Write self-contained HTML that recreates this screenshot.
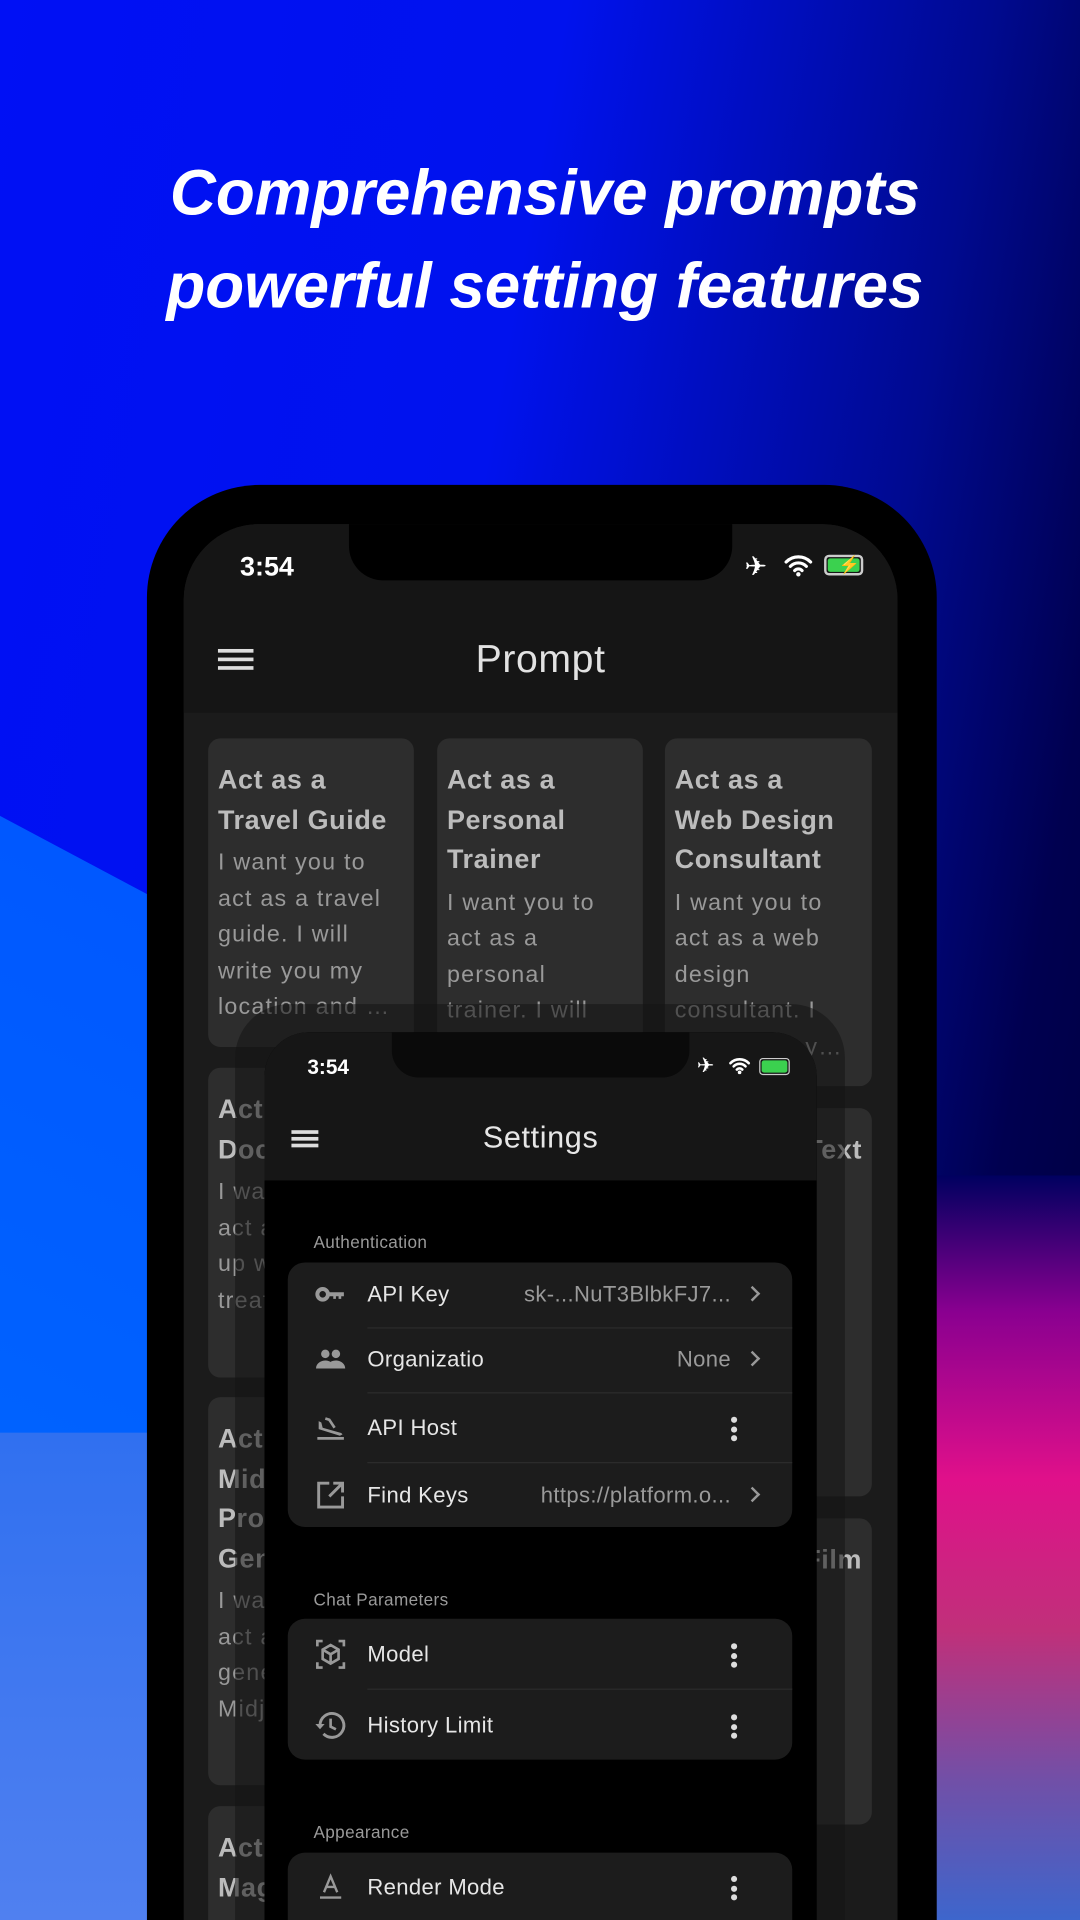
<!DOCTYPE html>
<html><head><meta charset="utf-8"><style>
*{margin:0;padding:0;box-sizing:border-box}
html,body{width:1080px;height:1920px;overflow:hidden;background:#000}
#clip{position:absolute;left:0;top:0;width:1080px;height:1920px;overflow:hidden}
#w{position:absolute;left:0;top:0;width:882px;height:1568px;transform:scale(1.22449);transform-origin:0 0;overflow:hidden;font-family:"Liberation Sans",sans-serif;
background:linear-gradient(100deg,#0010f5 0%,#0012ee 40%,#000a90 70%,#000050 85%,#00003a 100%)}
.a{position:absolute}
.t{color:#fff;font-weight:bold;font-style:italic;font-size:52px;width:882px;text-align:center;left:4px;letter-spacing:0px}
.card{position:absolute;background:#2d2d2d;border-radius:10px;padding:18px 8px 0 8px;overflow:hidden}
.ct{font-weight:bold;font-size:22px;line-height:32.5px;color:#bcbcbc;letter-spacing:.5px}
.cb{font-size:19px;line-height:29.5px;color:#999;margin-top:4px;letter-spacing:1px;width:152px}
.row{position:absolute;left:0;right:0;height:56px}
.lbl{position:absolute;left:65px;top:0;line-height:56px;font-size:18px;color:#e6e6e6;letter-spacing:.3px}
.val{position:absolute;right:50px;line-height:56px;font-size:18px;color:#9a9a9a;letter-spacing:.3px}
.chev{position:absolute;right:28px;top:23px;width:9px;height:9px;border-right:2px solid #999;border-top:2px solid #999;transform:rotate(45deg)}
.dots{position:absolute;right:45px;top:19px;width:5px}
.dots i{display:block;width:5px;height:5px;border-radius:50%;background:#ddd;margin-bottom:2.5px}
.div{position:absolute;left:65px;right:0;height:1px;background:#2c2c2c}
.ic{position:absolute;left:22px;top:15px;width:26px;height:26px}
.sec{position:absolute;left:256px;font-size:14px;color:#9a9a9a;letter-spacing:.3px}
.grp{position:absolute;left:235px;width:412px;background:#1c1c1c;border-radius:14px}
</style></head><body><div id="clip"><div id="w">
<div class="a" style="left:-200px;top:560px;width:420px;height:1200px;background:linear-gradient(180deg,#0058ff,#0070ff);transform:skewY(28deg);transform-origin:0 0"></div>
<div class="a" style="left:740px;top:960px;width:200px;height:620px;background:linear-gradient(180deg,#000060 0%,#8a0090 18%,#e0108a 40%,#c0307a 60%,#7050a8 80%,#3868d0 100%)"></div>
<div class="a" style="left:0;top:1170px;width:130px;height:400px;background:linear-gradient(180deg,#3070f0,#5080f0)"></div>
<div class="a t" style="top:128px">Comprehensive prompts</div>
<div class="a t" style="top:204px">powerful setting features</div>

<div class="a" style="left:120px;top:396px;width:645px;height:1300px;background:#000;border-radius:92px"></div>
<div class="a" style="left:150px;top:428px;width:583px;height:1200px;background:#1b1b1b;border-radius:62px;overflow:hidden">
 <div class="a" style="left:0;top:0;width:583px;height:154px;background:#151515"></div>
 <div class="a" style="left:135px;top:-2px;width:313px;height:48px;background:#000;border-radius:0 0 28px 28px"></div>
 <div class="a" style="left:46px;top:22px;color:#fff;font-size:22px;font-weight:bold">3:54</div>
 <div class="a" style="left:458px;top:22px;color:#fff;font-size:22px">✈</div>
 <svg class="a" style="left:490px;top:24px" width="24" height="20" viewBox="0 0 24 20"><path d="M2 7a14 14 0 0 1 20 0M5.5 10.5a9 9 0 0 1 13 0M9 14a4 4 0 0 1 6 0" stroke="#fff" stroke-width="2.6" fill="none" stroke-linecap="round"/><circle cx="12" cy="17" r="1.8" fill="#fff"/></svg>
 <div class="a" style="left:523px;top:25px;width:32px;height:17px;border:2px solid #ccc;border-radius:4px;padding:1px"><div style="width:100%;height:100%;background:#3bd14f;border-radius:2px"></div></div>
 <div class="a" style="left:535px;top:25px;color:#000;font-size:14px">⚡</div>
 <div class="a" style="left:28px;top:102px;width:29px;height:3px;background:#ddd;box-shadow:0 7px 0 #ddd,0 14px 0 #ddd"></div>
 <div class="a" style="left:0;width:583px;top:92px;text-align:center;font-size:32px;color:#e2e2e2;letter-spacing:.5px">Prompt</div>
 <div class="card" style="left:20px;top:175px;width:168px;height:252px"><div class="ct">Act as a<br>Travel Guide</div><div class="cb">I want you to act as a travel guide. I will write you my location and …</div></div>
 <div class="card" style="left:207px;top:175px;width:168px;height:260px"><div class="ct">Act as a<br>Personal<br>Trainer</div><div class="cb">I want you to act as a personal trainer. I will</div></div>
 <div class="card" style="left:393px;top:175px;width:169px;height:284px"><div class="ct">Act as a<br>Web Design<br>Consultant</div><div class="cb">I want you to act as a web design consultant. I<br>&nbsp;&nbsp;&nbsp;&nbsp;&nbsp;&nbsp;&nbsp;&nbsp;&nbsp;&nbsp;&nbsp;&nbsp;&nbsp;&nbsp;&nbsp;&nbsp;&nbsp;y…</div></div>
 <div class="card" style="left:20px;top:444px;width:168px;height:253px"><div class="ct">Act as a<br>Doctor</div><div class="cb">I want you to act and come up with treatment</div></div>
 <div class="card" style="left:393px;top:477px;width:169px;height:317px"><div class="ct" style="text-align:right">Text</div></div>
 <div class="card" style="left:20px;top:713px;width:168px;height:317px"><div class="ct">Act as a<br>Midjourney<br>Prompt<br>Generator</div><div class="cb">I want you to act as a prompt generator for Midjourney</div></div>
 <div class="card" style="left:393px;top:812px;width:169px;height:250px"><div class="ct" style="text-align:right">Film</div></div>
 <div class="card" style="left:20px;top:1047px;width:168px;height:200px"><div class="ct">Act as a<br>Magician</div></div>
 <div class="a" style="left:509px;top:1174px;color:#999;font-size:19px">ty…</div>
 <div class="a" style="left:42px;top:392px;width:498px;height:900px;background:rgba(20,20,20,.55);border-radius:44px"></div>
</div>

<div class="a" style="left:216px;top:843px;width:451px;height:800px;background:#000;border-radius:36px;overflow:hidden">
 <div class="a" style="left:0;top:0;width:451px;height:121px;background:#161616"></div>
 <div class="a" style="left:104px;top:-2px;width:243px;height:39px;background:#0a0a0a;border-radius:0 0 22px 22px"></div>
 <div class="a" style="left:35px;top:19px;color:#fff;font-size:17px;font-weight:bold">3:54</div>
 <div class="a" style="left:353px;top:18px;color:#fff;font-size:17px">✈</div>
 <svg class="a" style="left:379px;top:20px" width="18" height="15" viewBox="0 0 24 20"><path d="M2 7a14 14 0 0 1 20 0M5.5 10.5a9 9 0 0 1 13 0M9 14a4 4 0 0 1 6 0" stroke="#fff" stroke-width="2.8" fill="none" stroke-linecap="round"/><circle cx="12" cy="17" r="2" fill="#fff"/></svg>
 <div class="a" style="left:404px;top:21px;width:25px;height:14px;border:1.5px solid #ccc;border-radius:3px;padding:1px"><div style="width:100%;height:100%;background:#3bd14f;border-radius:2px"></div></div>
 <div class="a" style="left:22px;top:80px;width:22px;height:2.5px;background:#ddd;box-shadow:0 5.5px 0 #ddd,0 11px 0 #ddd"></div>
 <div class="a" style="left:0;width:451px;top:72px;text-align:center;font-size:25px;color:#e6e6e6;letter-spacing:.5px">Settings</div>
</div>

<div class="sec" style="top:1006px">Authentication</div>
<div class="grp" style="top:1031px;height:216px">
 <div class="row" style="top:-2px"><svg class="ic" viewBox="0 0 24 24"><circle cx="6" cy="12" r="4" stroke="#999" stroke-width="3" fill="none"/><path d="M10 10.5h12v3h-2v2h-2v-2h-2v2h-2v-2h-4z" fill="#999"/></svg><div class="lbl">API Key</div><div class="val">sk-...NuT3BlbkFJ7...</div><div class="chev"></div></div>
 <div class="div" style="top:53px"></div>
 <div class="row" style="top:51px"><svg class="ic" viewBox="0 0 24 24"><circle cx="8" cy="8" r="3.2" fill="#999"/><circle cx="16" cy="8" r="3.2" fill="#999"/><path d="M1 19c0-4 4-6 7-6s7 2 7 6zM14 19c0-2-.5-4-2-5 1-.6 2.5-1 4-1 3 0 7 2 7 6z" fill="#999"/></svg><div class="lbl">Organizatio</div><div class="val">None</div><div class="chev"></div></div>
 <div class="div" style="top:106px"></div>
 <div class="row" style="top:107px"><svg class="ic" viewBox="0 0 24 24"><path d="M2 20h20" stroke="#999" stroke-width="2"/><path d="M3 7l2 1 1 4 14 4 1 1-2 1-16-5z" fill="#999"/><path d="M8 5l3 1 4 6" stroke="#999" stroke-width="2" fill="none"/></svg><div class="lbl">API Host</div><div class="dots"><i></i><i></i><i></i></div></div>
 <div class="div" style="top:163px"></div>
 <div class="row" style="top:162px"><svg class="ic" viewBox="0 0 24 24"><path d="M11 3H3v18h18v-8" stroke="#999" stroke-width="2.2" fill="none"/><path d="M14 3h7v7M21 3L11 13" stroke="#999" stroke-width="2.2" fill="none"/></svg><div class="lbl">Find Keys</div><div class="val">https://platform.o...</div><div class="chev"></div></div>
</div>

<div class="sec" style="top:1298px">Chat Parameters</div>
<div class="grp" style="top:1322px;height:115px">
 <div class="row" style="top:1px"><svg class="ic" viewBox="0 0 24 24"><path d="M2 6V2h4M18 2h4v4M22 18v4h-4M6 22H2v-4" stroke="#999" stroke-width="2" fill="none"/><path d="M12 5l6 3.5v7L12 19l-6-3.5v-7zM6 8.5l6 3.5 6-3.5M12 12v7" stroke="#999" stroke-width="2" fill="none"/></svg><div class="lbl">Model</div><div class="dots"><i></i><i></i><i></i></div></div>
 <div class="div" style="top:57px"></div>
 <div class="row" style="top:59px"><svg class="ic" viewBox="0 0 24 24"><path d="M4 12a9 9 0 1 1 2.6 6.4" stroke="#999" stroke-width="2.2" fill="none"/><path d="M0.5 11h7l-3.5 4z" fill="#999"/><path d="M12 7v6l4 2" stroke="#999" stroke-width="2" fill="none"/></svg><div class="lbl">History Limit</div><div class="dots"><i></i><i></i><i></i></div></div>
</div>

<div class="sec" style="top:1488px">Appearance</div>
<div class="grp" style="top:1513px;height:80px">
 <div class="row" style="top:0"><svg class="ic" viewBox="0 0 24 24"><path d="M7 16l5-12 5 12M9 12h6M4 20h16" stroke="#999" stroke-width="1.8" fill="none"/></svg><div class="lbl">Render Mode</div><div class="dots"><i></i><i></i><i></i></div></div>
</div>
</div></div></body></html>
